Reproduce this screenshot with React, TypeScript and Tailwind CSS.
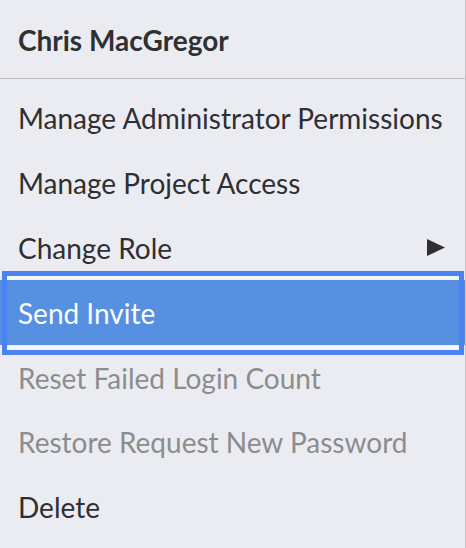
type Item = {
  label: string;
  disabled?: boolean;
  submenu?: boolean;
  active?: boolean;
};

const items: Item[] = [
  { label: "Manage Administrator Permissions" },
  { label: "Manage Project Access" },
  { label: "Change Role", submenu: true },
  { label: "Send Invite", active: true },
  { label: "Reset Failed Login Count", disabled: true },
  { label: "Restore Request New Password", disabled: true },
  { label: "Delete" },
];

const MenuRow = ({ item }: { item: Item }) => {
  const tone = item.active
    ? "bg-[#5790e0] text-[#fbfcff]"
    : item.disabled
    ? "text-[#8c8c8e]"
    : "text-[#2f2f31]";

  return (
    <div className={`relative flex h-[64.8px] items-center justify-between pl-[18px] pr-[20px] ${tone}`}>
      <span>{item.label}</span>
      {item.submenu && (
        <svg width="18" height="17" viewBox="0 0 18 17" className="text-[#2f2f31]">
          <path d="M0 0 L18 8.5 L0 17 Z" fill="currentColor" />
        </svg>
      )}
      {/* focus ring around the highlighted row */}
      {item.active && (
        <div className="pointer-events-none absolute -top-[9px] -bottom-[10px] left-[2px] right-[1px] border-[5px] border-[#4c83f2]">
          <div className="h-[4px] bg-[#f4f5f9]" />
          <div className="absolute bottom-0 left-0 right-0 h-[4px] bg-[#f4f5f9]" />
        </div>
      )}
    </div>
  );
};

const App = () => {
  return (
    <div
      className="h-[548px] w-[466px] overflow-hidden border-r border-[#c2c2c6] bg-[#ebecf1] text-[28px] leading-none"
      style={{ fontFamily: "Lato, 'Liberation Sans', sans-serif" }}
    >
      {/* Header */}
      <div className="flex h-[79px] items-center border-b border-[#b9b9bd] pl-[18px] pt-[1px] font-bold text-[#303032]">
        Chris MacGregor
      </div>

      {/* Actions */}
      <div className="pt-[7px]">
        {items.map((item) => (
          <MenuRow key={item.label} item={item} />
        ))}
      </div>
    </div>
  );
};

export default App;
